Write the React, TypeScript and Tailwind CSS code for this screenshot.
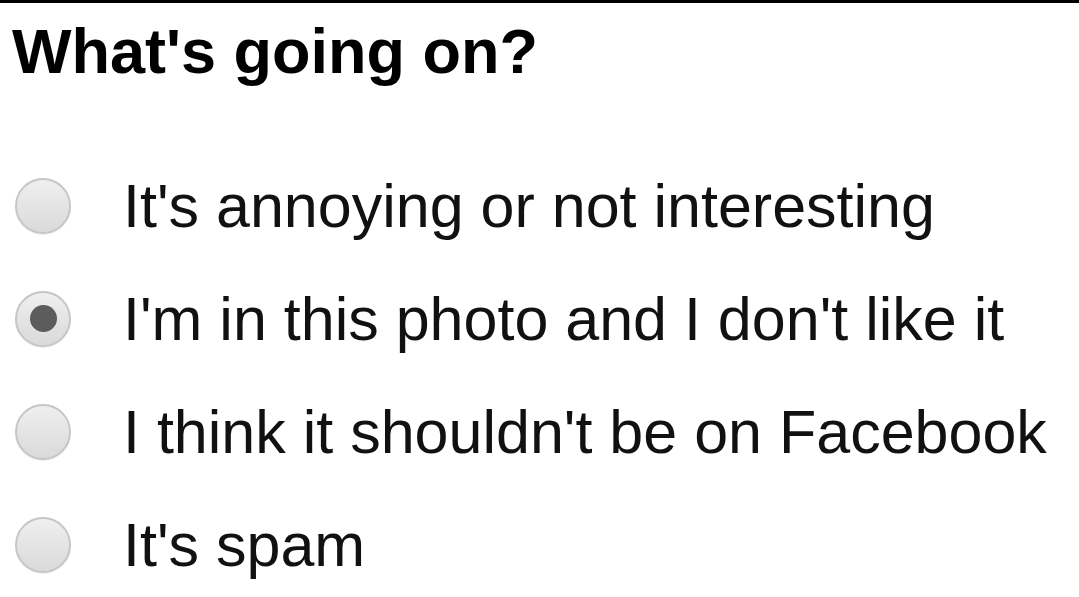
const options = [
  { label: "It's annoying or not interesting", checked: false },
  { label: "I'm in this photo and I don't like it", checked: true },
  { label: "I think it shouldn't be on Facebook", checked: false },
  { label: "It's spam", checked: false },
];

function Radio({ checked }: { checked: boolean }) {
  return (
    <div className="w-[56px] h-[56px] shrink-0 rounded-full border-2 border-[#c6c6c6] bg-gradient-to-b from-[#efefef] to-[#dadada] shadow-[0_1px_1px_rgba(0,0,0,0.08)] flex items-center justify-center">
      {checked && <div className="w-[27px] h-[27px] rounded-full bg-[#5c5c5c]" />}
    </div>
  );
}

export default function App() {
  return (
    <div className="w-[1079px] h-[597px] overflow-hidden bg-white font-['Liberation_Sans',Arial,sans-serif]">
      <div className="h-[3px] bg-black" />
      <h1 className="mt-[12px] pl-[12px] text-[63px] leading-[72px] font-bold text-black">
        What's going on?
      </h1>
      <div className="mt-[62px] flex flex-col">
        {options.map((o) => (
          <label key={o.label} className="h-[113px] flex items-center pl-[15px]">
            <Radio checked={o.checked} />
            <span className="ml-[52px] text-[61px] leading-[72px] text-[#111] whitespace-nowrap">
              {o.label}
            </span>
          </label>
        ))}
      </div>
    </div>
  );
}
